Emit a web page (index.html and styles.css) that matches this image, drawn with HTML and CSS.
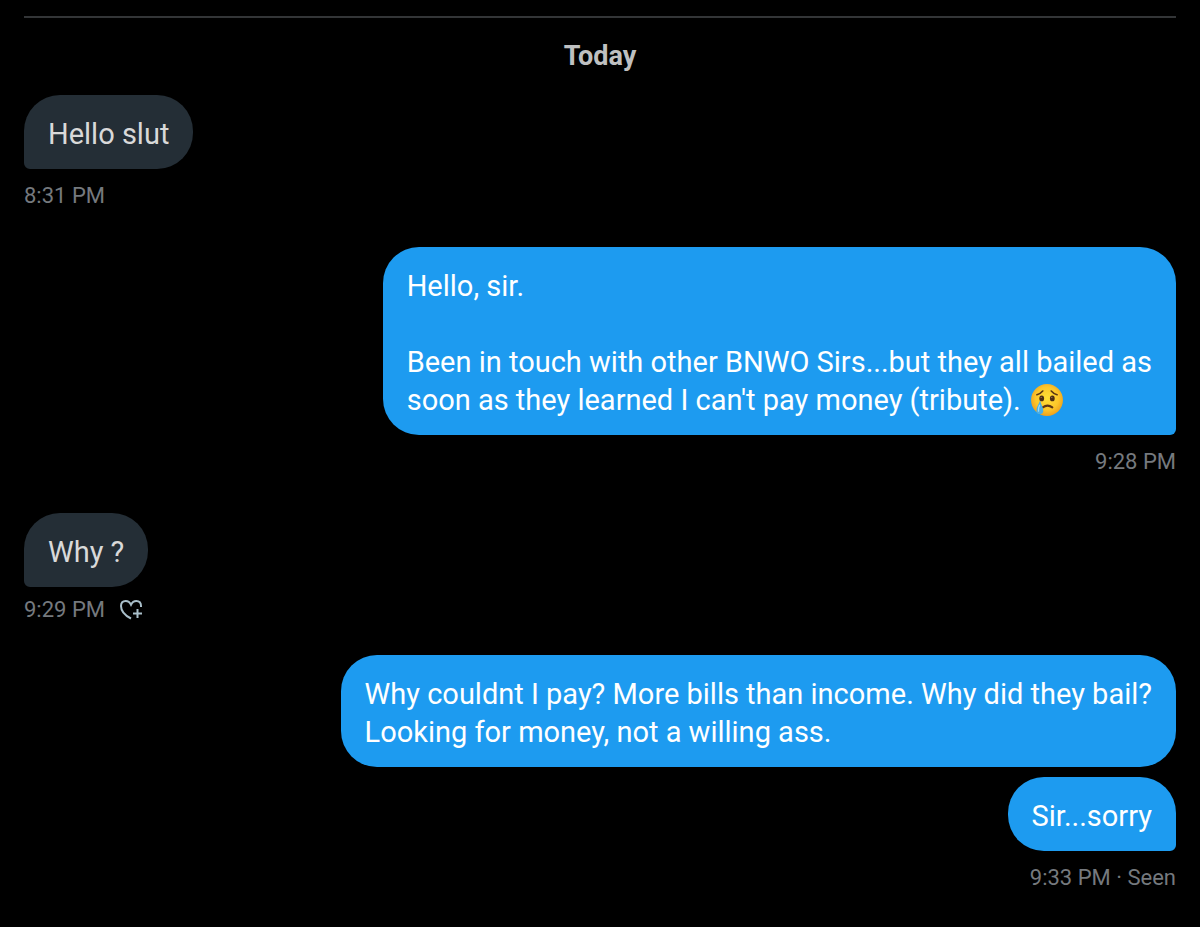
FILE: index.html
```html
<!DOCTYPE html>
<html lang="en">
<head>
<meta charset="utf-8">
<meta name="viewport" content="width=device-width, initial-scale=1">
<title>Messages</title>
<link rel="stylesheet" href="styles.css">
</head>
<body>
<main class="chat">
  <h2 class="day">Today</h2>
  <section class="group">
    <p class="bubble received tail-left">Hello slut</p>
    <div class="meta"><time>8:31 PM</time></div>
  </section>
  <section class="group sent-group">
    <p class="bubble sent tail-right">Hello, sir.<br><br>Been in touch with other BNWO Sirs...but they all bailed as<br>soon as they learned I can't pay money (tribute). <svg class="emoji" viewBox="0 0 64 64" role="img" aria-label="crying face">
      <defs>
        <radialGradient id="face" cx=".5" cy=".45" r=".55"><stop offset="0" stop-color="#ffdf35"/><stop offset=".65" stop-color="#fcc72b"/><stop offset="1" stop-color="#efa01c"/></radialGradient>
      </defs>
      <circle cx="32" cy="32" r="30" fill="url(#face)"/>
      <path d="M13 22Q20 20 24 15M51 22Q44 20 40 15" fill="none" stroke="#5b3516" stroke-width="3" stroke-linecap="round"/>
      <ellipse cx="22" cy="29" rx="4.5" ry="5.5" fill="#4a2c15"/>
      <ellipse cx="42" cy="29" rx="4.5" ry="5.5" fill="#4a2c15"/>
      <circle cx="21" cy="27" r="1.3" fill="#a87c4c"/>
      <circle cx="41" cy="27" r="1.3" fill="#a87c4c"/>
      <path d="M24 46Q33 39 42 46" fill="none" stroke="#5b3516" stroke-width="4" stroke-linecap="round"/>
      <path d="M19 33C16 41 12 46 12 52A6.500 6.500 0 0 0 25 52C25 46 21 41 19 33Z" fill="#4baee5"/>
      <path d="M18 42Q15 48 16 53" fill="none" stroke="#9bdcf8" stroke-width="2.500" stroke-linecap="round"/>
    </svg></p>
    <div class="meta"><time>9:28 PM</time></div>
  </section>
  <section class="group">
    <p class="bubble received tail-left">Why ?</p>
    <div class="meta compact"><time>9:29 PM</time><button class="react" type="button" aria-label="Add reaction"><svg viewBox="0 0 24 22" fill="none" stroke="#a9bfca" stroke-width="2"><path d="M12 19.500C7 17 2 12.500 2 7C2 3.800 4 2 6.700 2C9.300 2 11 3.600 12 5.700C13 3.600 14.700 2 17.300 2C20 2 22 3.800 22 7V8M18.500 10V19M14 14.500H23"/></svg></button></div>
  </section>
  <section class="group sent-group">
    <p class="bubble sent">Why couldnt I pay? More bills than income. Why did they bail?<br>Looking for money, not a willing ass.</p>
    <p class="bubble sent tail-right">Sir...sorry</p>
    <div class="meta"><time>9:33 PM</time>&nbsp;· Seen</div>
  </section>
</main>
</body>
</html>
```
FILE: styles.css
```css
* { box-sizing: border-box; }
body {
  margin: 0;
  background: #000;
  font-family: Roboto, "Liberation Sans", sans-serif;
}
.chat {
  margin: 16px 24px 0;
  border-top: 2px solid #333537;
  padding-top: 22px;
}
.day {
  margin: 0 0 23px;
  color: #bfc0c1;
  font-size: 27px;
  line-height: 32px;
  font-weight: 700;
  text-align: center;
}
.group {
  display: flex;
  flex-direction: column;
  align-items: flex-start;
}
.sent-group { align-items: flex-end; }
.bubble {
  margin: 0;
  padding: 20px 24px 16px;
  border-radius: 36px;
  font-size: 29px;
  line-height: 38px;
}
.bubble + .bubble { margin-top: 10px; }
.received { background: #242e36; color: #d9d9d9; }
.sent { background: #1d9bf0; color: #fff; }
.tail-left { border-bottom-left-radius: 6px; }
.tail-right { border-bottom-right-radius: 6px; }
.meta {
  display: flex;
  align-items: center;
  margin: 12px 0 36px;
  color: #75797e;
  font-size: 22px;
  line-height: 30px;
}
.compact { margin: 8px 0 30px; gap: 14px; }
.react {
  display: flex;
  margin: 0;
  padding: 0;
  border: 0;
  background: none;
  cursor: pointer;
}
.react svg { width: 24px; height: 22px; }
.emoji { width: 34px; height: 34px; margin-left: 2px; vertical-align: -7px; }
```
